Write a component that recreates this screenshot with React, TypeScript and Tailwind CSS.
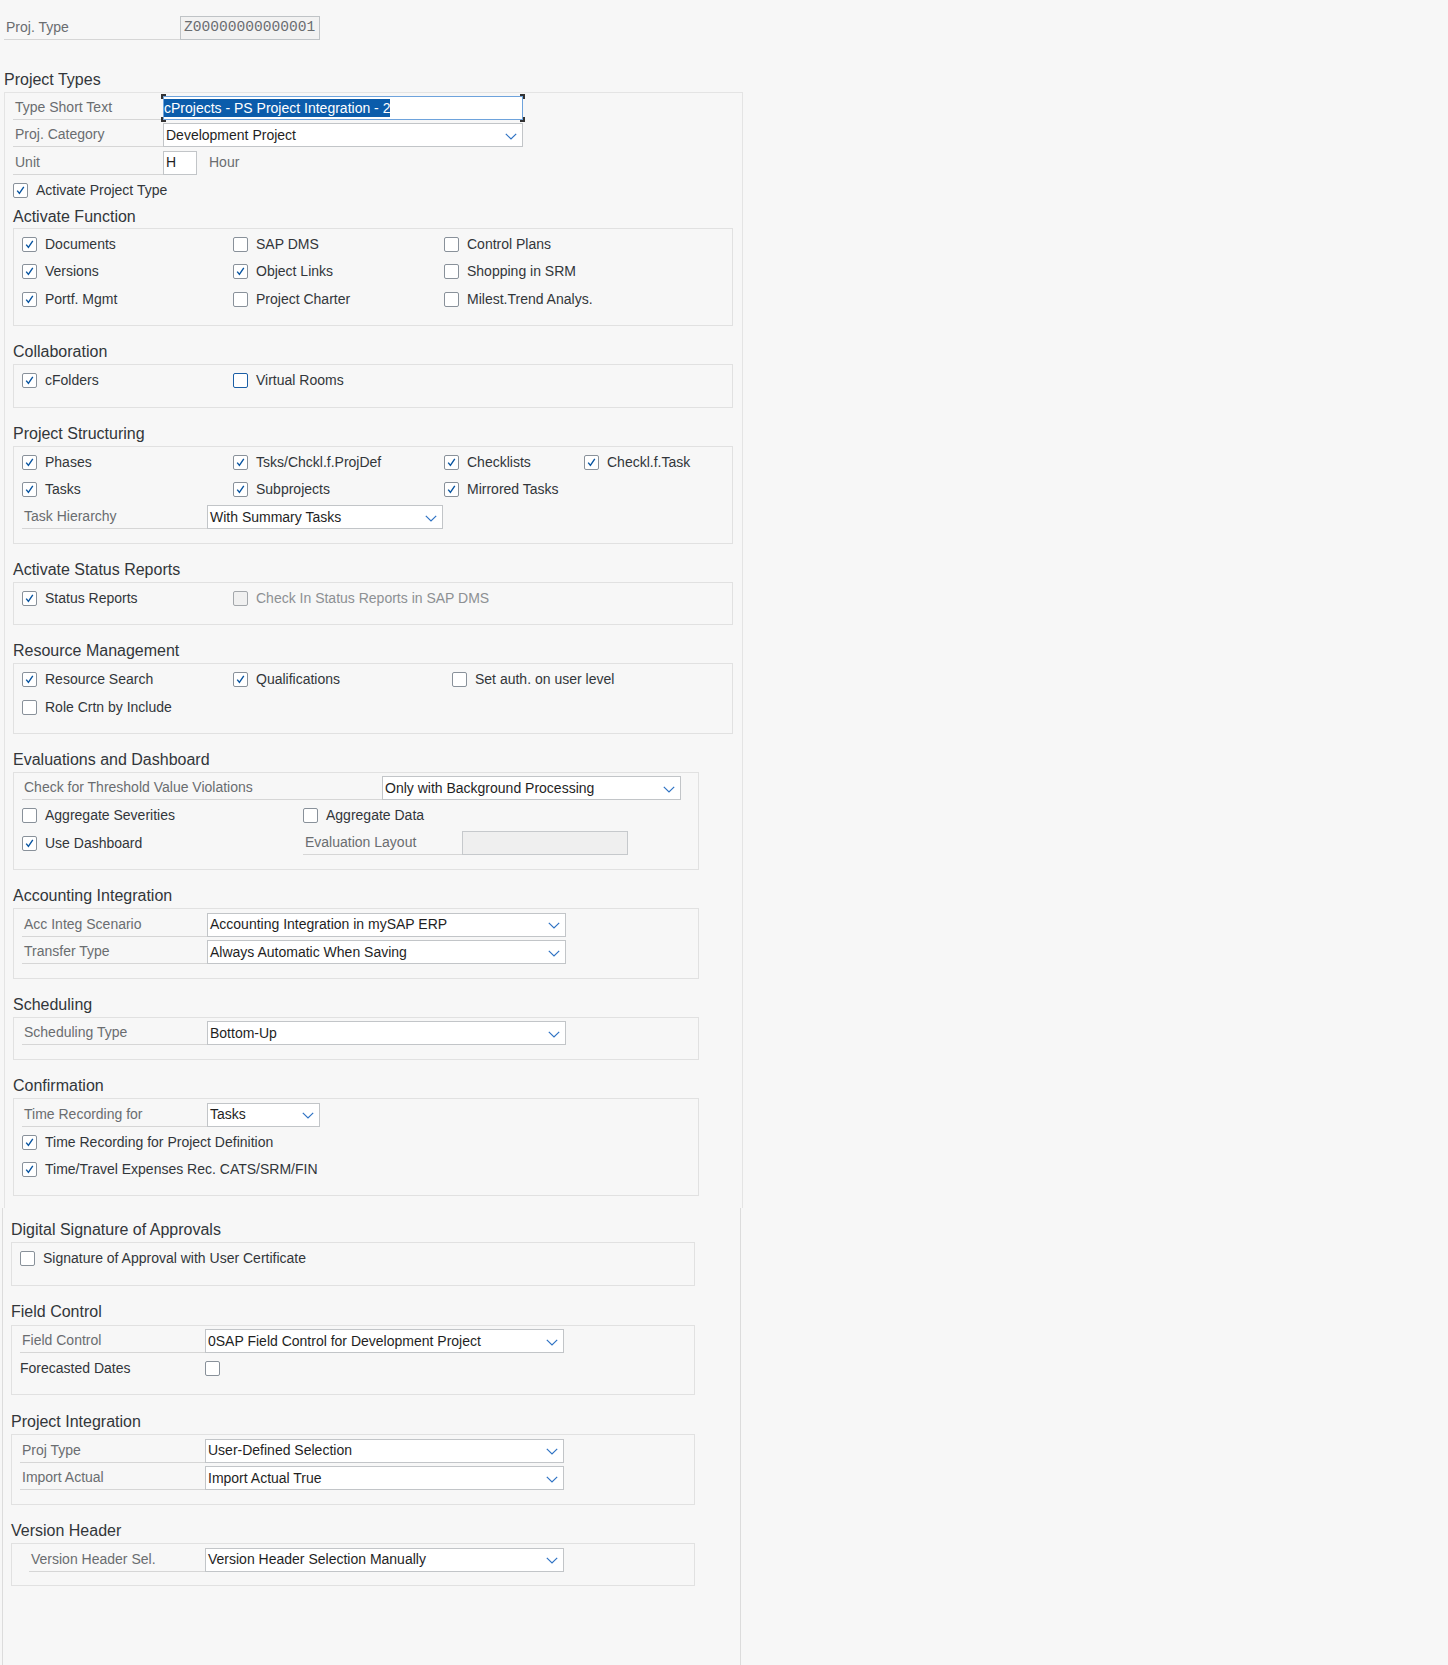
import React from "react";

type CheckProps = { checked?: boolean; focus?: boolean; disabled?: boolean };

function Box({ checked, focus, disabled }: CheckProps) {
  const border = focus
    ? "border-[#1b5fa6] bg-white"
    : disabled
      ? "border-[#a3a7ab] bg-[#f0f0f0]"
      : "border-[#89919a] bg-white";
  return (
    <span className={`flex h-[15px] w-[15px] shrink-0 items-center justify-center rounded-[2px] border ${border}`}>
      {checked && (
        <svg width="11" height="11" viewBox="0 0 11 11">
          <path d="M2.2 5.6 L4.4 8.4 L8.8 1.8" fill="none" stroke="#0854a0" strokeWidth="1.4" />
        </svg>
      )}
    </span>
  );
}

function Check({
  label,
  className = "",
  ...rest
}: CheckProps & { label: string; className?: string }) {
  return (
    <div className={`flex items-center gap-[8px] ${className}`}>
      <Box {...rest} />
      <span className={rest.disabled ? "text-[#8d9093]" : "text-[#32363a]"}>{label}</span>
    </div>
  );
}

function Chevron() {
  return (
    <svg width="12" height="7" viewBox="0 0 12 7" className="mt-[2px] shrink-0">
      <path d="M0.8 0.8 L6 6 L11.2 0.8" fill="none" stroke="#2f73c4" strokeWidth="1.2" />
    </svg>
  );
}

function Label({ text, className = "" }: { text: string; className?: string }) {
  return (
    <div className={`flex h-[24px] shrink-0 items-center border-b border-[#d6d6d6] pl-[2px] text-[#6a6d70] ${className}`}>
      {text}
    </div>
  );
}

function Select({ value, className = "" }: { value: string; className?: string }) {
  return (
    <div className={`flex h-[24px] shrink-0 items-center justify-between border border-[#c2c5c8] bg-white pl-[2px] pr-[5px] text-[#1f1f1f] ${className}`}>
      <span className="whitespace-nowrap">{value}</span>
      <Chevron />
    </div>
  );
}

function Row({ children }: { children: React.ReactNode }) {
  return <div className="flex h-[27.5px] items-center">{children}</div>;
}

function Heading({ text, className = "mt-[15px] mb-[1px]" }: { text: string; className?: string }) {
  return <div className={`h-[22px] text-[16px] leading-[22px] text-[#32363a] ${className}`}>{text}</div>;
}

function Group({ children, className = "w-[720px]" }: { children: React.ReactNode; className?: string }) {
  return <div className={`border border-[#e1e1e1] pb-[12px] pl-[8px] pt-[1.75px] ${className}`}>{children}</div>;
}

export default function App() {
  return (
    <div className="flex min-h-[1665px] flex-col bg-[#f7f7f7] text-[14px] text-[#32363a] [font-family:'Liberation_Sans',Arial,sans-serif]">
      {/* header field */}
      <div className="mt-[16px] flex h-[24px] items-stretch pl-[4px]">
        <div className="flex w-[176px] items-center border-b border-[#d6d6d6] pl-[2px] text-[#6a6d70]">Proj. Type</div>
        <div className="flex w-[140px] items-center border border-[#bfc3c6] bg-[#f2f2f2] pl-[3px] text-[14.6px] text-[#6a6d70] [font-family:'Liberation_Mono',monospace]">
          Z00000000000001
        </div>
      </div>

      <div className="mb-[1px] mt-[29px] h-[22px] pl-[4px] text-[16px] leading-[22px]">Project Types</div>

      <div className="ml-[4px] w-[739px] border-l border-r border-t border-[#e4e4e4] px-[8px] pb-[12px] pt-[1px]">
        <Row>
          <Label text="Type Short Text" className="w-[150px]" />
          <div className="relative flex h-[24px] w-[360px] items-center border border-[#6ea3dc] bg-white">
            <span className="bg-[#0b5cab] leading-[18px] text-white">cProjects - PS Project Integration - 2</span>
            <span className="absolute -left-[3px] -top-[3px] h-[5px] w-[5px] border-l-2 border-t-2 border-[#333]" />
            <span className="absolute -right-[3px] -top-[3px] h-[5px] w-[5px] border-r-2 border-t-2 border-[#333]" />
            <span className="absolute -bottom-[3px] -left-[3px] h-[5px] w-[5px] border-b-2 border-l-2 border-[#333]" />
            <span className="absolute -bottom-[3px] -right-[3px] h-[5px] w-[5px] border-b-2 border-r-2 border-[#333]" />
          </div>
        </Row>
        <Row>
          <Label text="Proj. Category" className="w-[150px]" />
          <Select value="Development Project" className="w-[360px]" />
        </Row>
        <Row>
          <Label text="Unit" className="w-[150px]" />
          <div className="flex h-[24px] w-[34px] items-center border border-[#c2c5c8] bg-white pl-[2px] text-[#1f1f1f]">H</div>
          <span className="ml-[12px] text-[#6a6d70]">Hour</span>
        </Row>
        <Row>
          <Check label="Activate Project Type" checked />
        </Row>

        <Heading text="Activate Function" className="mt-[1.5px] mb-0" />
        <Group>
          <Row>
            <Check label="Documents" checked className="w-[211px]" />
            <Check label="SAP DMS" className="w-[211px]" />
            <Check label="Control Plans" />
          </Row>
          <Row>
            <Check label="Versions" checked className="w-[211px]" />
            <Check label="Object Links" checked className="w-[211px]" />
            <Check label="Shopping in SRM" />
          </Row>
          <Row>
            <Check label="Portf. Mgmt" checked className="w-[211px]" />
            <Check label="Project Charter" className="w-[211px]" />
            <Check label="Milest.Trend Analys." />
          </Row>
        </Group>

        <Heading text="Collaboration" className="mt-[15.5px] mb-[1px]" />
        <Group>
          <Row>
            <Check label="cFolders" checked className="w-[211px]" />
            <Check label="Virtual Rooms" focus />
          </Row>
        </Group>

        <Heading text="Project Structuring" />
        <Group>
          <Row>
            <Check label="Phases" checked className="w-[211px]" />
            <Check label="Tsks/Chckl.f.ProjDef" checked className="w-[211px]" />
            <Check label="Checklists" checked className="w-[140px]" />
            <Check label="Checkl.f.Task" checked />
          </Row>
          <Row>
            <Check label="Tasks" checked className="w-[211px]" />
            <Check label="Subprojects" checked className="w-[211px]" />
            <Check label="Mirrored Tasks" checked />
          </Row>
          <Row>
            <Label text="Task Hierarchy" className="w-[185px]" />
            <Select value="With Summary Tasks" className="w-[236px]" />
          </Row>
        </Group>

        <Heading text="Activate Status Reports" />
        <Group>
          <Row>
            <Check label="Status Reports" checked className="w-[211px]" />
            <Check label="Check In Status Reports in SAP DMS" disabled />
          </Row>
        </Group>

        <Heading text="Resource Management" />
        <Group>
          <Row>
            <Check label="Resource Search" checked className="w-[211px]" />
            <Check label="Qualifications" checked className="w-[219px]" />
            <Check label="Set auth. on user level" />
          </Row>
          <Row>
            <Check label="Role Crtn by Include" />
          </Row>
        </Group>

        <Heading text="Evaluations and Dashboard" />
        <Group className="w-[686px]">
          <Row>
            <Label text="Check for Threshold Value Violations" className="w-[360px]" />
            <Select value="Only with Background Processing" className="w-[299px]" />
          </Row>
          <Row>
            <Check label="Aggregate Severities" className="w-[281px]" />
            <Check label="Aggregate Data" />
          </Row>
          <Row>
            <Check label="Use Dashboard" checked className="w-[281px]" />
            <Label text="Evaluation Layout" className="w-[159px]" />
            <div className="h-[24px] w-[166px] border border-[#c6c9cc] bg-[#efefef]" />
          </Row>
        </Group>

        <Heading text="Accounting Integration" />
        <Group className="w-[686px]">
          <Row>
            <Label text="Acc Integ Scenario" className="w-[185px]" />
            <Select value="Accounting Integration in mySAP ERP" className="w-[359px]" />
          </Row>
          <Row>
            <Label text="Transfer Type" className="w-[185px]" />
            <Select value="Always Automatic When Saving" className="w-[359px]" />
          </Row>
        </Group>

        <Heading text="Scheduling" />
        <Group className="w-[686px]">
          <Row>
            <Label text="Scheduling Type" className="w-[185px]" />
            <Select value="Bottom-Up" className="w-[359px]" />
          </Row>
        </Group>

        <Heading text="Confirmation" />
        <Group className="w-[686px]">
          <Row>
            <Label text="Time Recording for" className="w-[185px]" />
            <Select value="Tasks" className="w-[113px]" />
          </Row>
          <Row>
            <Check label="Time Recording for Project Definition" checked />
          </Row>
          <Row>
            <Check label="Time/Travel Expenses Rec. CATS/SRM/FIN" checked />
          </Row>
        </Group>
      </div>

      <div className="ml-[2px] flex w-[739px] flex-1 flex-col border-l border-r border-[#dcdcdc] px-[8px]">
        <Heading text="Digital Signature of Approvals" className="mb-[1px] mt-[11px]" />
        <Group className="w-[684px]">
          <Row>
            <Check label="Signature of Approval with User Certificate" />
          </Row>
        </Group>

        <Heading text="Field Control" className="mt-[15.5px] mb-[1.5px]" />
        <Group className="w-[684px]">
          <Row>
            <Label text="Field Control" className="w-[185px]" />
            <Select value="0SAP Field Control for Development Project" className="w-[359px]" />
          </Row>
          <Row>
            <div className="w-[185px] text-[#32363a]">Forecasted Dates</div>
            <Box />
          </Row>
        </Group>

        <Heading text="Project Integration" className="mt-[16px] mb-[1px]" />
        <Group className="w-[684px]">
          <Row>
            <Label text="Proj Type" className="w-[185px]" />
            <Select value="User-Defined Selection" className="w-[359px]" />
          </Row>
          <Row>
            <Label text="Import Actual" className="w-[185px]" />
            <Select value="Import Actual True" className="w-[359px]" />
          </Row>
        </Group>

        <Heading text="Version Header" />
        <Group className="w-[684px]">
          <Row>
            <Label text="Version Header Sel." className="ml-[9px] w-[176px]" />
            <Select value="Version Header Selection Manually" className="w-[359px]" />
          </Row>
        </Group>
      </div>
    </div>
  );
}
